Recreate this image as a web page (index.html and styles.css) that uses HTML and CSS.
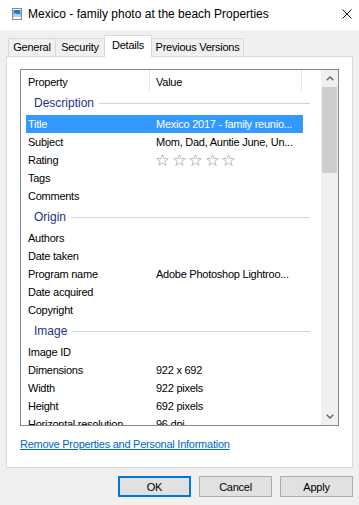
FILE: index.html
```html
<!DOCTYPE html>
<html>
<head>
<meta charset="utf-8">
<link rel="stylesheet" href="styles.css">
</head>
<body>
<div class="titlebar">
  <svg class="title-icon" width="10" height="12" viewBox="0 0 10 12"><rect x="0.5" y="0.5" width="9" height="11" fill="#fff" stroke="#8a8a8a"/><rect x="1.5" y="2" width="7" height="7" fill="#1f78d1"/><path d="M1.5 7 L3.5 5 L5 6.5 L6.5 5.5 L8.5 7 L8.5 9 L1.5 9Z" fill="#a9d4ff"/></svg>
  <span class="title">Mexico - family photo at the beach Properties</span>
  <svg class="close" width="10" height="10" viewBox="0 0 10 10"><path d="M0.5 0.5 L9.5 9.5 M9.5 0.5 L0.5 9.5" stroke="#111" stroke-width="1" fill="none"/></svg>
</div>
<div class="tabs">
  <div class="tab tab-general">General</div>
  <div class="tab tab-security">Security</div>
  <div class="tab tab-details active">Details</div>
  <div class="tab tab-prev">Previous Versions</div>
</div>
<div class="panel">
  <div class="list">
    <div class="list-body">
      <div class="lhead">
        <div class="hcell hprop">Property</div>
        <div class="hcell hval">Value</div>
      </div>
      <div class="group">Description</div>
      <div class="row sel"><div class="k">Title</div><div class="v">Mexico 2017 - family reunio...</div></div>
      <div class="row"><div class="k">Subject</div><div class="v">Mom, Dad, Auntie June, Un...</div></div>
      <div class="row"><div class="k">Rating</div><div class="v stars">
        <svg class="star" width="13" height="13" viewBox="0 0 13 13"><polygon points="6.5,0.6 7.97,4.48 12.2,4.65 8.88,7.27 10.03,11.35 6.5,9 2.97,11.35 4.12,7.27 0.8,4.65 5.03,4.48"/></svg>
        <svg class="star" width="13" height="13" viewBox="0 0 13 13"><polygon points="6.5,0.6 7.97,4.48 12.2,4.65 8.88,7.27 10.03,11.35 6.5,9 2.97,11.35 4.12,7.27 0.8,4.65 5.03,4.48"/></svg>
        <svg class="star" width="13" height="13" viewBox="0 0 13 13"><polygon points="6.5,0.6 7.97,4.48 12.2,4.65 8.88,7.27 10.03,11.35 6.5,9 2.97,11.35 4.12,7.27 0.8,4.65 5.03,4.48"/></svg>
        <svg class="star" width="13" height="13" viewBox="0 0 13 13"><polygon points="6.5,0.6 7.97,4.48 12.2,4.65 8.88,7.27 10.03,11.35 6.5,9 2.97,11.35 4.12,7.27 0.8,4.65 5.03,4.48"/></svg>
        <svg class="star" width="13" height="13" viewBox="0 0 13 13"><polygon points="6.5,0.6 7.97,4.48 12.2,4.65 8.88,7.27 10.03,11.35 6.5,9 2.97,11.35 4.12,7.27 0.8,4.65 5.03,4.48"/></svg>
      </div></div>
      <div class="row"><div class="k">Tags</div><div class="v"></div></div>
      <div class="row"><div class="k">Comments</div><div class="v"></div></div>
      <div class="group">Origin</div>
      <div class="row"><div class="k">Authors</div><div class="v"></div></div>
      <div class="row"><div class="k">Date taken</div><div class="v"></div></div>
      <div class="row"><div class="k">Program name</div><div class="v">Adobe Photoshop Lightroo...</div></div>
      <div class="row"><div class="k">Date acquired</div><div class="v"></div></div>
      <div class="row"><div class="k">Copyright</div><div class="v"></div></div>
      <div class="group">Image</div>
      <div class="row"><div class="k">Image ID</div><div class="v"></div></div>
      <div class="row"><div class="k">Dimensions</div><div class="v">922 x 692</div></div>
      <div class="row"><div class="k">Width</div><div class="v">922 pixels</div></div>
      <div class="row"><div class="k">Height</div><div class="v">692 pixels</div></div>
      <div class="row"><div class="k">Horizontal resolution</div><div class="v">96 dpi</div></div>
    </div>
    <div class="scrollbar">
      <div class="sb-arrow"><svg width="8" height="5" viewBox="0 0 8 5"><path d="M0.7 4.3 L4 1 L7.3 4.3" stroke="#606060" stroke-width="1.4" fill="none"/></svg></div>
      <div class="sb-thumb"></div>
      <div class="sb-track"></div>
      <div class="sb-arrow"><svg width="8" height="5" viewBox="0 0 8 5"><path d="M0.7 0.7 L4 4 L7.3 0.7" stroke="#606060" stroke-width="1.4" fill="none"/></svg></div>
    </div>
  </div>
  <a class="link" href="#">Remove Properties and Personal Information</a>
</div>
<div class="footer">
  <div class="btn default">OK</div>
  <div class="btn">Cancel</div>
  <div class="btn">Apply</div>
</div>
</body>
</html>
```
FILE: styles.css
```css
* { box-sizing: border-box; }
html, body { margin: 0; }
body {
  width: 359px;
  height: 505px;
  overflow: hidden;
  background: #f0f0f0;
  font-family: "Liberation Sans", Arial, sans-serif;
  font-size: 11px;
  letter-spacing: -0.25px;
  color: #000;
}
.titlebar {
  height: 30px;
  background: #fff;
  display: flex;
  align-items: center;
  padding: 0 7px 2px 12px;
}
.title-icon { flex: none; }
.title {
  margin-left: 6px;
  font-size: 12px;
  letter-spacing: 0;
  color: #000;
}
.close { margin-left: auto; flex: none; }

.tabs {
  height: 26px;
  display: flex;
  align-items: flex-end;
  padding-left: 8px;
}
.tab {
  height: 18px;
  border: 1px solid #d9d9d9;
  border-bottom: none;
  background: #f0f0f0;
  display: flex;
  align-items: center;
  justify-content: center;
  margin-left: -1px;
  padding-bottom: 1px;
}
.tab-general { width: 48px; margin-left: 0; }
.tab-security { width: 50px; }
.tab-details { width: 48px; }
.tab-prev { width: 93px; }
.tab.active {
  height: 22px;
  background: #fff;
  margin-bottom: -1px;
  position: relative;
  z-index: 1;
  padding-bottom: 3px;
}

.panel {
  margin: 0 6px;
  height: 412px;
  border: 1px solid #d9d9d9;
  background: #fff;
  padding: 12px 13px 0;
}
.list {
  height: 357px;
  border: 1px solid #828790;
  display: flex;
}
.list-body {
  flex: 1;
  overflow: hidden;
}
.lhead {
  display: flex;
  height: 21px;
  margin-left: 5px;
}
.hcell {
  height: 21px;
  padding-top: 3px;
  line-height: 18px;
  border-right: 1px solid #e5e5e5;
}
.hprop { width: 124px; padding-left: 2px; }
.hval { width: 152px; padding-left: 6px; }

.group {
  display: flex;
  align-items: center;
  height: 24px;
  width: 284px;
  margin-left: 5px;
  padding-left: 8px;
  font-size: 12px;
  letter-spacing: 0;
  color: #1e3287;
}
.group::after {
  content: "";
  flex: 1;
  height: 1px;
  background: #cdd5df;
  margin-left: 5px;
}
.row {
  display: flex;
  height: 18px;
  line-height: 18px;
  width: 277px;
  margin-left: 5px;
}
.row.sel { background: #3399ff; color: #fff; }
.k { width: 124px; padding-left: 2px; white-space: nowrap; }
.v { width: 153px; padding-left: 6px; white-space: nowrap; overflow: hidden; }
.stars { display: flex; align-items: center; gap: 3.5px; }
.star polygon { fill: none; stroke: #bdbdbd; stroke-width: 1; }

.scrollbar {
  width: 17px;
  flex: none;
  background: #f0f0f0;
  display: flex;
  flex-direction: column;
}
.sb-arrow {
  height: 17px;
  display: flex;
  align-items: center;
  justify-content: center;
  flex: none;
}
.sb-thumb {
  height: 86px;
  margin: 0 1px;
  background: #cdcdcd;
  flex: none;
}
.sb-track { flex: 1; }

.link {
  display: block;
  margin-top: 11px;
  line-height: 14px;
  color: #0066cc;
  text-decoration: underline;
  width: max-content;
}

.footer {
  display: flex;
  justify-content: flex-end;
  gap: 8px;
  padding: 8px 6px 0;
}
.btn {
  width: 73px;
  height: 21px;
  border: 1px solid #adadad;
  background: #e1e1e1;
  display: flex;
  align-items: center;
  justify-content: center;
}
.btn.default {
  border-color: #0078d7;
  box-shadow: inset 0 0 0 1px #0078d7;
}
```
